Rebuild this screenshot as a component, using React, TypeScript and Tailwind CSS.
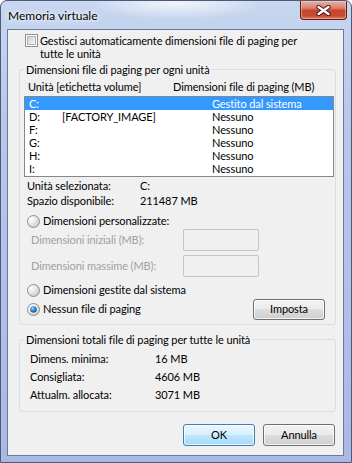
import React from "react";

function Radio({ checked }: { checked?: boolean }) {
  return (
    <svg width="13" height="13" viewBox="0 0 13 13" className="shrink-0">
      <defs>
        <radialGradient id="rgOff" cx="0.3" cy="0.3" r="0.8">
          <stop offset="0" stopColor="#ffffff" />
          <stop offset="0.6" stopColor="#e2e2e2" />
          <stop offset="1" stopColor="#c4c4c4" />
        </radialGradient>
        <radialGradient id="rgDot" cx="0.4" cy="0.35" r="0.75">
          <stop offset="0" stopColor="#a4e0ff" />
          <stop offset="0.45" stopColor="#2f83d6" />
          <stop offset="1" stopColor="#123b6e" />
        </radialGradient>
      </defs>
      <circle cx="6.5" cy="6.5" r="6" fill="url(#rgOff)" stroke="#8e8f8f" strokeWidth="1" />
      {checked && (
        <>
          <circle cx="6.5" cy="6.5" r="4" fill="#ffffff" />
          <circle cx="6.5" cy="6.5" r="3.3" fill="url(#rgDot)" />
        </>
      )}
    </svg>
  );
}

function Checkbox() {
  return (
    <div className="w-[13px] h-[13px] shrink-0 border border-[#8e8f8f] bg-white p-[1px]">
      <div className="w-full h-full border border-[#b0b4ba] bg-[linear-gradient(135deg,#cbcfd5_0%,#e6e8eb_60%,#f6f6f6_100%)]" />
    </div>
  );
}

function Btn({ children, def, className }: { children: React.ReactNode; def?: boolean; className?: string }) {
  return (
    <div
      className={
        (def
          ? "border-[#3c7fb1] bg-[linear-gradient(#eaf6fd_0%,#d9f0fc_50%,#bee6fd_50%,#a7d9f5_100%)] "
          : "border-[#707070] bg-[linear-gradient(#f2f2f2_0%,#ebebeb_50%,#dddddd_50%,#cfcfcf_100%)] ") +
        "flex items-center justify-center rounded-[3px] border shadow-[inset_0_0_0_1px_rgba(255,255,255,0.75)] text-black " +
        (className ?? "")
      }
    >
      {children}
    </div>
  );
}

const drives: [string, string, string][] = [
  ["C:", "", "Gestito dal sistema"],
  ["D:", "[FACTORY_IMAGE]", "Nessuno"],
  ["F:", "", "Nessuno"],
  ["G:", "", "Nessuno"],
  ["H:", "", "Nessuno"],
  ["I:", "", "Nessuno"],
];

export default function App() {
  return (
    <div className="w-[352px] h-[463px] flex flex-col overflow-hidden rounded-t-[7px] border border-[#4a5a78] bg-[linear-gradient(180deg,#c8d7ef_0%,#b8c8eb_25%,#aab9e4_100%)] text-black [font-family:Lato,'Liberation_Sans',sans-serif]">
      {/* title bar */}
      <div className="h-[28px] shrink-0 flex items-start justify-between bg-[radial-gradient(ellipse_90px_16px_at_175px_2px,rgba(255,255,255,0.75),rgba(255,255,255,0))]">
        <div className="pl-[7px] pt-[7px] leading-[15px] text-[12px] [text-shadow:0_0_6px_#ffffff,0_0_3px_#ffffff]">
          Memoria virtuale
        </div>
        <div className="mr-[4px] w-[47px] h-[19px] flex items-center justify-center rounded-b-[4px] border border-t-0 border-[#5a1c12] bg-[linear-gradient(180deg,#e9b0a3_0%,#d9806c_40%,#c7452c_52%,#c9482e_80%,#dc7a5e_100%)] shadow-[inset_0_0_0_1px_rgba(255,220,210,0.45)]">
          <svg width="15" height="11" viewBox="0 0 15 11">
            <path d="M2.5 2 L12.5 9 M12.5 2 L2.5 9" stroke="#3f1209" strokeWidth="4.2" strokeLinecap="round" />
            <path d="M2.5 2 L12.5 9 M12.5 2 L2.5 9" stroke="#ffffff" strokeWidth="2.4" strokeLinecap="round" />
          </svg>
        </div>
      </div>

      {/* client area */}
      <div className="flex-1 ml-[6px] mr-[7px] mb-[6px] border border-[#6b7a98] bg-[#f0f0f0] flex flex-col text-[11px] tracking-[-0.1px]">
        {/* checkbox */}
        <div className="mt-[4px] ml-[17px] flex items-start">
          <Checkbox />
          <div className="ml-[2px] leading-[13px]">
            Gestisci automaticamente dimensioni file di paging per
            <br />
            tutte le unità
          </div>
        </div>

        {/* group 1 */}
        <fieldset className="mt-[3px] ml-[11px] w-[317px] rounded-[3px] border border-[#d5dfe5] pb-[4px]">
          <legend className="ml-[4px] px-[2px] leading-[13px]">Dimensioni file di paging per ogni unità</legend>
          <div className="pt-[4px] pl-[8px] flex leading-[13px]">
            <div className="w-[145px]">Unità [etichetta volume]</div>
            <div>Dimensioni file di paging (MB)</div>
          </div>
          <div className="mt-[3px] ml-[4px] w-[310px] border border-[#828790] bg-white pb-[1px]">
            {drives.map(([d, v, s], i) => (
              <div
                key={d}
                className={
                  (i === 0 ? "bg-[#3399ff] text-white " : "") +
                  "grid grid-cols-[33px_150px_1fr] h-[13px] leading-[13px] pl-[4px] whitespace-nowrap"
                }
              >
                <span>{d}</span>
                <span>{v}</span>
                <span>{s}</span>
              </div>
            ))}
          </div>
          <div className="mt-[1px] pl-[7px] grid grid-cols-[113px_1fr] leading-[15px]">
            <span>Unità selezionata:</span>
            <span>C:</span>
            <span>Spazio disponibile:</span>
            <span>211487 MB</span>
          </div>
          <div className="mt-[6px] pl-[7px] flex items-center gap-[3px] h-[15px]">
            <Radio />
            <span>Dimensioni personalizzate:</span>
          </div>
          <div className="pl-[11px] flex items-center h-[22px] text-[#a0a0a0]">
            <span className="w-[152px]">Dimensioni iniziali (MB):</span>
            <div className="w-[76px] h-[22px] rounded-[2px] border border-[#c2c4c7] bg-[#f0f0f0]" />
          </div>
          <div className="mt-[4px] pl-[11px] flex items-center h-[22px] text-[#a0a0a0]">
            <span className="w-[152px]">Dimensioni massime (MB):</span>
            <div className="w-[76px] h-[22px] rounded-[2px] border border-[#c2c4c7] bg-[#f0f0f0]" />
          </div>
          <div className="mt-[6px] pl-[7px] flex items-center gap-[3px] h-[15px]">
            <Radio />
            <span>Dimensioni gestite dal sistema</span>
          </div>
          <div className="mt-[1px] pl-[7px] flex items-center h-[21px]">
            <div className="flex items-center gap-[3px]">
              <Radio checked />
              <span>Nessun file di paging</span>
            </div>
            <Btn className="ml-auto mr-[10px] w-[72px] h-[21px]">Imposta</Btn>
          </div>
        </fieldset>

        {/* group 2 */}
        <fieldset className="mt-[8px] ml-[11px] w-[317px] rounded-[3px] border border-[#d5dfe5] pb-[7px]">
          <legend className="ml-[4px] px-[2px] leading-[13px]">Dimensioni totali file di paging per tutte le unità</legend>
          <div className="pt-[4px] pl-[10px] grid grid-cols-[125px_1fr] leading-[18px]">
            <span>Dimens. minima:</span>
            <span>16 MB</span>
            <span>Consigliata:</span>
            <span>4606 MB</span>
            <span>Attualm. allocata:</span>
            <span>3071 MB</span>
          </div>
        </fieldset>

        {/* buttons */}
        <div className="mt-[12px] pr-[8px] flex justify-end gap-[8px]">
          <Btn def className="w-[72px] h-[22px]">OK</Btn>
          <Btn className="w-[72px] h-[22px]">Annulla</Btn>
        </div>
      </div>
    </div>
  );
}
